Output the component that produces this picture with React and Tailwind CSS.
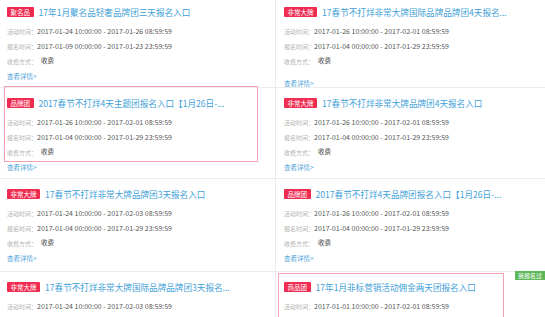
import React from "react";

const FONT = { fontFamily: '"Noto Sans CJK SC", "Noto Sans", sans-serif' };

const left = [
  { tag: "聚名品", title: "17年1月聚名品轻奢品牌团三天报名入口", a: "2017-01-24 10:00:00 - 2017-01-26 08:59:59", b: "2017-01-09 00:00:00 - 2017-01-23 23:59:59" },
  { tag: "品牌团", title: "2017春节不打烊4天主题团报名入口【1月26日-...", a: "2017-01-26 10:00:00 - 2017-02-01 08:59:59", b: "2017-01-04 00:00:00 - 2017-01-29 23:59:59", hl: true },
  { tag: "非常大牌", title: "17春节不打烊非常大牌品牌团3天报名入口", a: "2017-01-24 10:00:00 - 2017-02-03 08:59:59", b: "2017-01-04 00:00:00 - 2017-01-29 23:59:59", tall: true },
  { tag: "非常大牌", title: "17春节不打烊非常大牌国际品牌品牌团3天报名...", a: "2017-01-24 10:00:00 - 2017-02-03 08:59:59", b: "2017-01-04 00:00:00 - 2017-01-29 23:59:59" },
];

const right = [
  { tag: "非常大牌", title: "17春节不打烊非常大牌国际品牌品牌团4天报名...", a: "2017-01-26 10:00:00 - 2017-02-01 08:59:59", b: "2017-01-04 00:00:00 - 2017-01-29 23:59:59", lowLink: true },
  { tag: "非常大牌", title: "17春节不打烊非常大牌品牌团4天报名入口", a: "2017-01-26 10:00:00 - 2017-02-01 08:59:59", b: "2017-01-04 00:00:00 - 2017-01-29 23:59:59" },
  { tag: "品牌团", title: "2017春节不打烊4天品牌团报名入口【1月26日-...", a: "2017-01-26 10:00:00 - 2017-02-01 08:59:59", b: "2017-01-04 00:00:00 - 2017-01-29 23:59:59", tall: true },
  { tag: "商品团", title: "17年1月非标营销活动佣金两天团报名入口", a: "2017-01-01 10:00:00 - 2017-02-01 08:59:59", b: "2017-01-04 00:00:00 - 2017-01-29 23:59:59", hl2: true, done: true },
];

function Meta({ label, value }) {
  return (
    <div className="flex items-center h-[15px] whitespace-nowrap">
      <span className="text-[6px] text-[#b4b4b4] leading-[15px]">{label}</span>
      <span className="text-[7px] text-[#555] leading-[15px]">{value}</span>
    </div>
  );
}

function Card({ d, first, pl }) {
  const pt = first ? "pt-[6px]" : "pt-[9px]";
  return (
    <div className={`relative border-b border-[#ececec] ${pt} ${pl} ${d.tall ? "pb-[5.5px]" : d.lowLink ? "pb-0" : "pb-[3.5px]"}`}>
      <div className="flex items-center h-[12px] whitespace-nowrap">
        <span className="bg-[#ef2b50] text-white text-[6.5px] h-[10px] leading-[10px] px-[3.5px] rounded-[1px]">{d.tag}</span>
        <span className="ml-[5px] text-[8.6px] text-[#3f9fd8] leading-[12px]">{d.title}</span>
      </div>
      <div className="mt-[5.5px]">
        <Meta label="活动时间：" value={d.a} />
        <Meta label="报名时间：" value={d.b} />
        <div className="flex items-center h-[15px] whitespace-nowrap">
          <span className="text-[6px] text-[#b4b4b4]">收费方式：</span>
          <span className="ml-[4px] text-[6.5px] text-[#444]">收费</span>
        </div>
      </div>
      <div className={`${d.lowLink ? "mt-[10.5px] h-[8px] leading-[8px]" : "h-[15px] leading-[15px]"} text-[6.5px] text-[#4a9fd8]`}>查看详情&gt;</div>
      {d.hl && (
        <div className="absolute left-[4px] top-[-2px] w-[254px] h-[76px] border border-[#f2a2b0] pointer-events-none" />
      )}
      {d.hl2 && (
        <div className="absolute left-[2px] top-[1px] w-[226px] h-[80px] border border-[#f2a2b0] pointer-events-none" />
      )}
      {d.done && (
        <div className="absolute left-[239px] top-[-1px] bg-[#5db85a] text-white text-[6px] h-[9px] leading-[9px] px-[3px] whitespace-nowrap">我报名过</div>
      )}
    </div>
  );
}

export default function App() {
  return (
    <div className="w-[545px] h-[317px] overflow-hidden bg-white flex" style={FONT}>
      <div className="w-[276px] flex flex-col border-r border-[#ececec]">
        {left.map((d, i) => (
          <Card key={i} d={d} first={i === 0} pl="pl-[7px]" />
        ))}
      </div>
      <div className="flex-1 flex flex-col">
        {right.map((d, i) => (
          <Card key={i} d={d} first={i === 0} pl="pl-[8px]" />
        ))}
      </div>
    </div>
  );
}
